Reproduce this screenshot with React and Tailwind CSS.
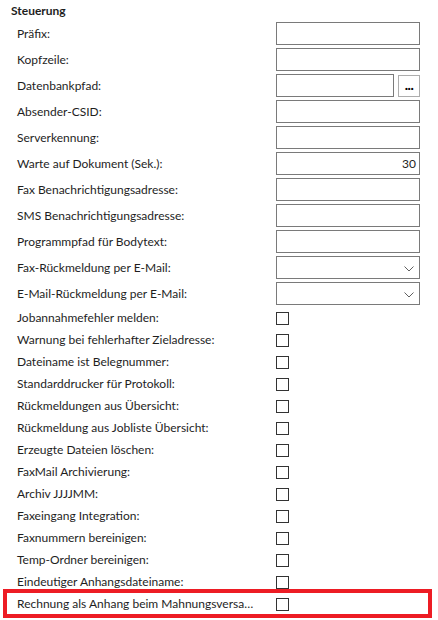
import React from "react";

const textFields = [
  { label: "Präfix:" },
  { label: "Kopfzeile:" },
  { label: "Datenbankpfad:", browse: true },
  { label: "Absender-CSID:" },
  { label: "Serverkennung:" },
  { label: "Warte auf Dokument (Sek.):", value: "30" },
  { label: "Fax Benachrichtigungsadresse:" },
  { label: "SMS Benachrichtigungsadresse:" },
  { label: "Programmpfad für Bodytext:" },
  { label: "Fax-Rückmeldung per E-Mail:", combo: true },
  { label: "E-Mail-Rückmeldung per E-Mail:", combo: true },
];

const checkFields = [
  "Jobannahmefehler melden:",
  "Warnung bei fehlerhafter Zieladresse:",
  "Dateiname ist Belegnummer:",
  "Standarddrucker für Protokoll:",
  "Rückmeldungen aus Übersicht:",
  "Rückmeldung aus Jobliste Übersicht:",
  "Erzeugte Dateien löschen:",
  "FaxMail Archivierung:",
  "Archiv JJJJMM:",
  "Faxeingang Integration:",
  "Faxnummern bereinigen:",
  "Temp-Ordner bereinigen:",
  "Eindeutiger Anhangsdateiname:",
  "Rechnung als Anhang beim Mahnungsversand:",
];

const Chevron = () => (
  <svg width="10" height="6" viewBox="0 0 10 6" className="absolute right-[5px] top-[9px]">
    <polyline points="0.5,0.5 5,5 9.5,0.5" fill="none" stroke="#606060" strokeWidth="1" />
  </svg>
);

const FieldRow = ({ field }) => (
  <div className="flex items-center h-[23px]">
    <div className="w-[276px] pl-[17px] pr-[14px] truncate">{field.label}</div>
    {field.browse ? (
      <div className="flex items-center gap-[4px]">
        <div className="w-[118px] h-[23px] border border-[#7a7a7a] bg-white" />
        <button className="w-[22px] h-[22px] border border-[#adadad] bg-white flex items-end justify-center pb-[4px] text-[14px] font-black leading-none tracking-[-0.5px] text-black">
          ...
        </button>
      </div>
    ) : (
      <div className="relative w-[144px] h-[23px] border border-[#7a7a7a] bg-white flex items-center justify-end pr-[3px]">
        {field.value}
        {field.combo && <Chevron />}
      </div>
    )}
  </div>
);

const CheckRow = ({ label, highlight }) => (
  <div className="relative flex items-center h-[22px]">
    {highlight && (
      <div className="absolute left-[3px] right-[6px] top-[-4px] bottom-[-3px] border-4 border-[#ed1c24]" />
    )}
    <div className="w-[276px] pl-[17px] pr-[19px] truncate">{label}</div>
    <div className="w-[13px] h-[13px] border border-[#333333] bg-white" />
  </div>
);

export default function App() {
  return (
    <div
      className="w-[438px] h-[620px] bg-white text-[#1e1e1e] text-[12px] overflow-hidden"
      style={{ fontFamily: 'Lato, "Open Sans", sans-serif' }}
    >
      <div className="h-[22px] pl-[11px] pt-[3px] font-bold leading-[16px]">Steuerung</div>
      <div className="flex flex-col gap-[3px]">
        {textFields.map((f) => (
          <FieldRow key={f.label} field={f} />
        ))}
      </div>
      <div className="mt-[2px] flex flex-col">
        {checkFields.map((c, i) => (
          <CheckRow key={c} label={c} highlight={i === checkFields.length - 1} />
        ))}
      </div>
    </div>
  );
}
